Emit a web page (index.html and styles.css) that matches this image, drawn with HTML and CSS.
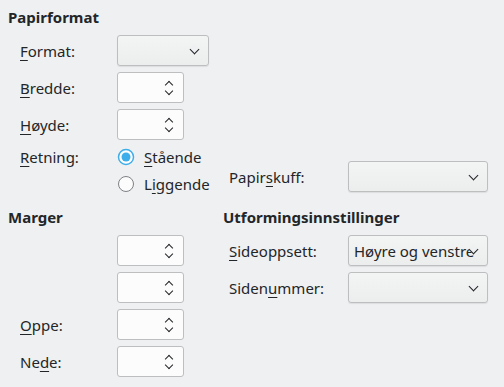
FILE: index.html
```html
<!DOCTYPE html>
<html lang="nb">
  <head>
    <meta charset="UTF-8" />
    <title>Side</title>
    <link rel="stylesheet" href="styles.css">
  </head>
  <body>
    <div class="top">
      <div class="left">
        <h3>Papirformat</h3>
        <div class="row">
          <label><u>F</u>ormat:</label>
          <div class="combo narrow"><span></span><i class="chev"></i></div>
        </div>
        <div class="row">
          <label><u>B</u>redde:</label>
          <div class="spin"><i class="up"></i><i class="down"></i></div>
        </div>
        <div class="row">
          <label><u>H</u>øyde:</label>
          <div class="spin"><i class="up"></i><i class="down"></i></div>
        </div>
        <div class="radios">
          <label class="rlabel"><u>R</u>etning:</label>
          <div class="opts">
            <div class="opt">
              <svg width="18" height="18" viewBox="0 0 18 18">
                <circle cx="9" cy="9" r="7.5" fill="#ffffff" stroke="#3daee9" stroke-width="1.5" />
                <circle cx="9" cy="9" r="4.5" fill="#3daee9" />
              </svg>
              <span><u>S</u>tående</span>
            </div>
            <div class="opt">
              <svg width="18" height="18" viewBox="0 0 18 18">
                <circle cx="9" cy="9" r="7.5" fill="#fcfcfc" stroke="#7e8184" stroke-width="1" />
              </svg>
              <span>L<u>i</u>ggende</span>
            </div>
          </div>
        </div>
      </div>
      <div class="right">
        <div class="row rrow">
          <label>Papir<u>s</u>kuff:</label>
          <div class="combo wide"><span></span><i class="chev"></i></div>
        </div>
      </div>
    </div>

    <div class="bottom">
      <div class="left">
        <h3>Marger</h3>
        <div class="row">
          <label></label>
          <div class="spin"><i class="up"></i><i class="down"></i></div>
        </div>
        <div class="row">
          <label></label>
          <div class="spin"><i class="up"></i><i class="down"></i></div>
        </div>
        <div class="row">
          <label><u>O</u>ppe:</label>
          <div class="spin"><i class="up"></i><i class="down"></i></div>
        </div>
        <div class="row">
          <label>Ne<u>d</u>e:</label>
          <div class="spin"><i class="up"></i><i class="down"></i></div>
        </div>
      </div>
      <div class="right">
        <h3>Utformingsinnstillinger</h3>
        <div class="row rrow">
          <label><u>S</u>ideoppsett:</label>
          <div class="combo wide"><span>Høyre og venstre</span><i class="chev"></i></div>
        </div>
        <div class="row rrow">
          <label>Siden<u>u</u>mmer:</label>
          <div class="combo wide"><span></span><i class="chev"></i></div>
        </div>
      </div>
    </div>
  </body>
</html>
```

FILE: styles.css
```css
body {
  margin: 0;
  padding: 8px 0 0 8px;
  background-color: #eff0f1;
  color: #232629;
  font-family: "Noto Sans", sans-serif;
  font-size: 15px;
}
h3 {
  margin: 0 0 9px 0;
  font-size: 15px;
  font-weight: bold;
  line-height: 18px;
}
u {
  text-decoration-thickness: 1px;
  text-underline-offset: 3px;
}
.top,
.bottom {
  display: flex;
}
.top {
  align-items: flex-end;
}
.bottom {
  margin-top: 15px;
}
.left {
  width: 215px;
}
.row {
  display: flex;
  align-items: center;
  height: 31px;
  margin-bottom: 6px;
  padding-left: 12px;
}
.row label {
  width: 97px;
}
.rrow {
  padding-left: 6px;
  margin-bottom: 6px;
}
.rrow label {
  width: 119px;
}
.top .rrow {
  margin-bottom: 1px;
}
.spin,
.combo {
  position: relative;
  box-sizing: border-box;
  height: 31px;
  border: 1px solid #bcbebf;
  border-radius: 3px;
}
.spin {
  width: 67px;
  background-color: #fcfcfc;
}
.combo {
  background: linear-gradient(#f3f4f4, #eceded);
  box-shadow: 0 1px 1px rgba(0, 0, 0, 0.08);
  display: flex;
  align-items: center;
  overflow: hidden;
}
.narrow {
  width: 92px;
}
.wide {
  width: 140px;
}
.combo span {
  padding-left: 5px;
  white-space: nowrap;
  overflow: hidden;
  width: 128px;
}
.chev {
  position: absolute;
  right: 10px;
  top: 10px;
  width: 6px;
  height: 6px;
  border-right: 1px solid #232629;
  border-bottom: 1px solid #232629;
  transform: rotate(45deg);
  background-color: #eff0f1;
}
.up,
.down {
  position: absolute;
  right: 11px;
  width: 5px;
  height: 5px;
  border-left: 1px solid #232629;
  border-top: 1px solid #232629;
}
.up {
  top: 9px;
  transform: rotate(45deg);
}
.down {
  top: 15px;
  transform: rotate(225deg);
}
.radios {
  display: flex;
  padding-left: 12px;
  margin-top: 8px;
}
.rlabel {
  width: 97px;
  line-height: 18px;
}
.opts {
  display: flex;
  flex-direction: column;
  gap: 9px;
}
.opt {
  display: flex;
  align-items: center;
  gap: 9px;
  height: 18px;
}
.opt svg {
  display: block;
}
.right h3 {
  margin-bottom: 9px;
}
```
